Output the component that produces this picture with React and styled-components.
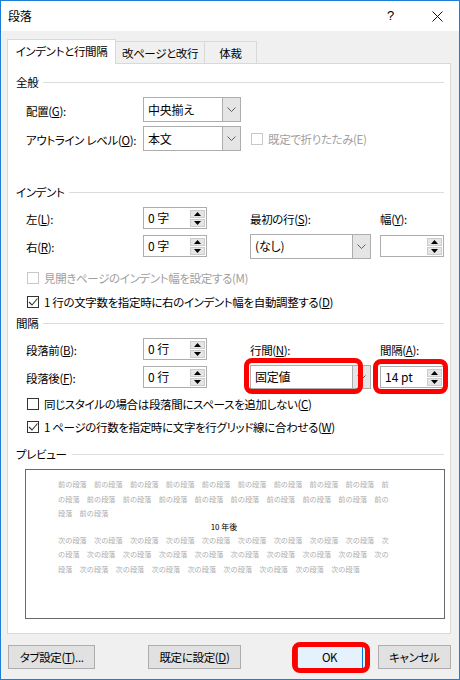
import React from "react";
import styled, { createGlobalStyle, css } from "styled-components";

const GlobalStyle = createGlobalStyle`
  body {
    margin: 0;
    background: #ffffff;
    font-family: "Noto Sans CJK JP", "Noto Sans", sans-serif;
    font-feature-settings: "palt";
    font-size: 11.5px;
    letter-spacing: -0.35px;
    color: #000;
  }
`;

const before = Array(20).fill("前の段落").join("　");
const after = Array(27).fill("次の段落").join("　");
const chunk = (s) => [s.slice(0, 46), s.slice(46, 92), s.slice(92)];

const Spin = ({ value }) => (
  <SpinBox>
    <SpinValue>{value}</SpinValue>
    <SpinBtns>
      <SpinBtn>
        <svg width="7" height="4" viewBox="0 0 7 4">
          <path d="M3.5 0 L7 4 L0 4 Z" fill="#000" />
        </svg>
      </SpinBtn>
      <SpinBtn>
        <svg width="7" height="4" viewBox="0 0 7 4">
          <path d="M0 0 L7 0 L3.5 4 Z" fill="#000" />
        </svg>
      </SpinBtn>
    </SpinBtns>
  </SpinBox>
);

const Select = ({ value, w, h = 25 }) => (
  <SelectBox $w={w} $h={h}>
    <SelectText>{value}</SelectText>
    <DropBtn>
      <svg width="9" height="5" viewBox="0 0 9 5">
        <path d="M0.5 0.5 L4.5 4.5 L8.5 0.5" stroke="#5f5f5f" fill="none" />
      </svg>
    </DropBtn>
  </SelectBox>
);

const Check = ({ checked, disabled, children }) => (
  <CheckRow $disabled={disabled}>
    <Box $disabled={disabled}>
      {checked && (
        <svg width="10" height="10" viewBox="0 0 10 10">
          <path d="M1 5 L4 8 L9.5 1.5" stroke="#333" strokeWidth="1.1" fill="none" />
        </svg>
      )}
    </Box>
    <span>{children}</span>
  </CheckRow>
);

const App = () => {
  return (
    <>
      <GlobalStyle />
      <Window>
        <TitleBar>
          <Title>段落</Title>
          <TitleIcons>
            <Help>?</Help>
            <svg width="11" height="11" viewBox="0 0 11 11">
              <path d="M0.5 0.5 L10.5 10.5 M10.5 0.5 L0.5 10.5" stroke="#111" strokeWidth="1" />
            </svg>
          </TitleIcons>
        </TitleBar>

        <Body>
          <Tabs>
            <Tab $active $w={109}>インデントと行間隔</Tab>
            <Tab $w={90}>改ページと改行</Tab>
            <Tab $w={53}>体裁</Tab>
          </Tabs>

          <Panel>
            <SectionHead>
              <span>全般</span>
              <Rule />
            </SectionHead>
            <FieldGrid $rows="29px 29px" $mt={5}>
              <Label>
                配置(<u>G</u>):
              </Label>
              <Select value="中央揃え" w={98} />
              <Spacer />
              <Spacer />
              <Label>
                アウトライン レベル(<u>O</u>):
              </Label>
              <Select value="本文" w={98} />
              <Cell $col="3 / span 2">
                <Check disabled>既定で折りたたみ(E)</Check>
              </Cell>
            </FieldGrid>

            <SectionHead $mt={31}>
              <span>インデント</span>
              <Rule />
            </SectionHead>
            <FieldGrid $rows="28px 28px" $mt={4}>
              <Label>
                左(<u>L</u>):
              </Label>
              <Spin value="0 字" />
              <Label>
                最初の行(<u>S</u>):
              </Label>
              <Label>
                幅(<u>Y</u>):
              </Label>
              <Label>
                右(<u>R</u>):
              </Label>
              <Spin value="0 字" />
              <Select value="(なし)" w={121} />
              <Spin value="" />
            </FieldGrid>
            <CheckList $mt={6} $row={24}>
              <Check disabled>見開きページのインデント幅を設定する(M)</Check>
              <Check checked>
                1 行の文字数を指定時に右のインデント幅を自動調整する(<u>D</u>)
              </Check>
            </CheckList>

            <SectionHead $mt={1}>
              <span>間隔</span>
              <Rule />
            </SectionHead>
            <FieldGrid $rows="28px 28px" $mt={4}>
              <Label>
                段落前(<u>B</u>):
              </Label>
              <Spin value="0 行" />
              <Label>
                行間(<u>N</u>):
              </Label>
              <Label>
                間隔(<u>A</u>):
              </Label>
              <Label>
                段落後(<u>F</u>):
              </Label>
              <Spin value="0 行" />
              <Mark $inset="-7px 17px -5px -6px">
                <Select value="固定値" w={121} h={24} />
              </Mark>
              <Mark $inset="-7px -4px -6px -7px">
                <Spin value="14 pt" />
              </Mark>
            </FieldGrid>
            <CheckList $mt={1} $row={23}>
              <Check>
                同じスタイルの場合は段落間にスペースを追加しない(<u>C</u>)
              </Check>
              <Check checked>
                1 ページの行数を指定時に文字を行グリッド線に合わせる(<u>W</u>)
              </Check>
            </CheckList>

            <SectionHead $mt={8}>
              <span>プレビュー</span>
              <Rule />
            </SectionHead>
            <Preview>
              <PrevBlock>
                {chunk(before).map((l, i) => (
                  <PrevLine key={"b" + i}>{l}</PrevLine>
                ))}
                <Sample>10 年後</Sample>
                {chunk(after).map((l, i) => (
                  <PrevLine key={"a" + i}>{l}</PrevLine>
                ))}
              </PrevBlock>
            </Preview>
          </Panel>

          <Footer>
            <Button $w={88}>
              タブ設定(<u>T</u>)...
            </Button>
            <Button $w={93} $ml={53}>
              既定に設定(<u>D</u>)
            </Button>
            <Mark $inset="-3px -7px -4px -5px" $ml={56}>
              <Button $w={66} $primary>
                OK
              </Button>
            </Mark>
            <Button $w={74} $ml={15}>
              キャンセル
            </Button>
          </Footer>
        </Body>
      </Window>
    </>
  );
};

//Styles
const Window = styled.div`
  width: 460px;
  height: 680px;
  box-sizing: border-box;
  border: 1px solid #1c7ed6;
  background: #f0f0f0;
  display: flex;
  flex-direction: column;
  overflow: hidden;
`;

const TitleBar = styled.div`
  height: 30px;
  background: #fff;
  display: flex;
  align-items: center;
  padding: 0 16px 0 7px;
  flex-shrink: 0;
`;

const Title = styled.div`
  font-size: 12px;
  line-height: 16px;
`;

const TitleIcons = styled.div`
  margin-left: auto;
  display: flex;
  align-items: center;
  gap: 38px;
`;

const Help = styled.span`
  font-family: "Liberation Sans", sans-serif;
  font-size: 13px;
  line-height: 16px;
`;

const Body = styled.div`
  padding: 8px 8px 0 6px;
`;

const Tabs = styled.div`
  display: flex;
  align-items: flex-end;
  height: 24px;
`;

const Tab = styled.div`
  width: ${(p) => p.$w}px;
  box-sizing: border-box;
  display: flex;
  align-items: center;
  justify-content: center;
  line-height: 16px;
  white-space: nowrap;
  border: 1px solid #d9d9d9;
  border-bottom: none;
  margin-left: -1px;
  ${(p) =>
    p.$active
      ? css`
          height: 25px;
          margin-left: 0;
          margin-bottom: -1px;
          background: #fff;
          position: relative;
          z-index: 1;
          padding-bottom: 3px;
        `
      : css`
          height: 22px;
          background: #f0f0f0;
        `}
`;

const Panel = styled.div`
  height: 571px;
  box-sizing: border-box;
  background: #fff;
  border: 1px solid #d9d9d9;
  padding: 10px 6px 0 8px;
`;

const SectionHead = styled.div`
  display: flex;
  align-items: center;
  gap: 5px;
  height: 16px;
  line-height: 16px;
  margin-top: ${(p) => p.$mt || 0}px;
  white-space: nowrap;
`;

const Rule = styled.div`
  flex: 1;
  height: 1px;
  background: #dcdcdc;
`;

const FieldGrid = styled.div`
  display: grid;
  grid-template-columns: 117px 107px 130px 64px;
  grid-template-rows: ${(p) => p.$rows};
  align-items: center;
  margin: ${(p) => p.$mt}px 0 0 10px;
`;

const Cell = styled.div`
  grid-column: ${(p) => p.$col};
`;

const Spacer = styled.div``;

const Label = styled.div`
  line-height: 16px;
  white-space: nowrap;
  padding-top: 2px;
`;

const SelectBox = styled.div`
  width: ${(p) => p.$w}px;
  height: ${(p) => p.$h}px;
  box-sizing: border-box;
  border: 1px solid #adadad;
  background: #fff;
  display: flex;
`;

const SelectText = styled.div`
  flex: 1;
  display: flex;
  align-items: center;
  padding-left: 4px;
  line-height: 16px;
  font-size: 12px;
  letter-spacing: -0.2px;
`;

const DropBtn = styled.div`
  width: 17px;
  background: #e5e5e5;
  border-left: 1px solid #adadad;
  display: flex;
  align-items: center;
  justify-content: center;
`;

const SpinBox = styled.div`
  width: 64px;
  height: 22px;
  box-sizing: border-box;
  border: 1px solid #adadad;
  background: #fff;
  display: flex;
  align-items: center;
  padding: 0 1px 0 4px;
`;

const SpinValue = styled.div`
  flex: 1;
  line-height: 16px;
  font-size: 12px;
  letter-spacing: 0;
  white-space: nowrap;
`;

const SpinBtns = styled.div`
  display: flex;
  flex-direction: column;
  gap: 1px;
`;

const SpinBtn = styled.div`
  width: 15px;
  height: 8px;
  box-sizing: border-box;
  background: #e5e5e5;
  border: 1px solid #cccccc;
  display: flex;
  align-items: center;
  justify-content: center;
`;

const CheckList = styled.div`
  margin: ${(p) => p.$mt}px 0 0 10px;
  display: grid;
  grid-auto-rows: ${(p) => p.$row}px;
  align-items: center;
`;

const CheckRow = styled.div`
  display: flex;
  align-items: center;
  gap: 5px;
  line-height: 16px;
  white-space: nowrap;
  color: ${(p) => (p.$disabled ? "#a0a0a0" : "#000")};
  margin-left: 1px;
`;

const Box = styled.div`
  width: 12px;
  height: 12px;
  box-sizing: border-box;
  border: 1px solid ${(p) => (p.$disabled ? "#c8c8c8" : "#333")};
  background: #fff;
  display: flex;
  align-items: center;
  justify-content: center;
  flex-shrink: 0;
`;

const Mark = styled.div`
  position: relative;
  margin-left: ${(p) => p.$ml || 0}px;
  &::after {
    content: "";
    position: absolute;
    inset: ${(p) => p.$inset};
    border: 5px solid #ff0000;
    border-radius: 8px;
    pointer-events: none;
  }
`;

const Preview = styled.div`
  margin: 7px 0 0 9px;
  width: 420px;
  height: 150px;
  box-sizing: border-box;
  border: 1px solid #696969;
  padding: 7px 0 0 32px;
`;

const PrevBlock = styled.div`
  width: 332px;
`;

const PrevLine = styled.div`
  font-size: 7.2px;
  letter-spacing: 0;
  line-height: 14.5px;
  color: #adadad;
  white-space: nowrap;
  font-feature-settings: normal;
`;

const Sample = styled.div`
  font-size: 8px;
  letter-spacing: 0;
  line-height: 12px;
  text-align: center;
  color: #000;
`;

const Footer = styled.div`
  display: flex;
  margin-top: 11px;
  height: 24px;
  margin-left: 1px;
`;

const Button = styled.div`
  width: ${(p) => p.$w}px;
  height: 24px;
  box-sizing: border-box;
  margin-left: ${(p) => p.$ml || 0}px;
  display: flex;
  align-items: center;
  justify-content: center;
  line-height: 16px;
  white-space: nowrap;
  background: ${(p) => (p.$primary ? "#e5f1fb" : "#e1e1e1")};
  border: 1px solid ${(p) => (p.$primary ? "#0078d7" : "#adadad")};
`;

export default App;
